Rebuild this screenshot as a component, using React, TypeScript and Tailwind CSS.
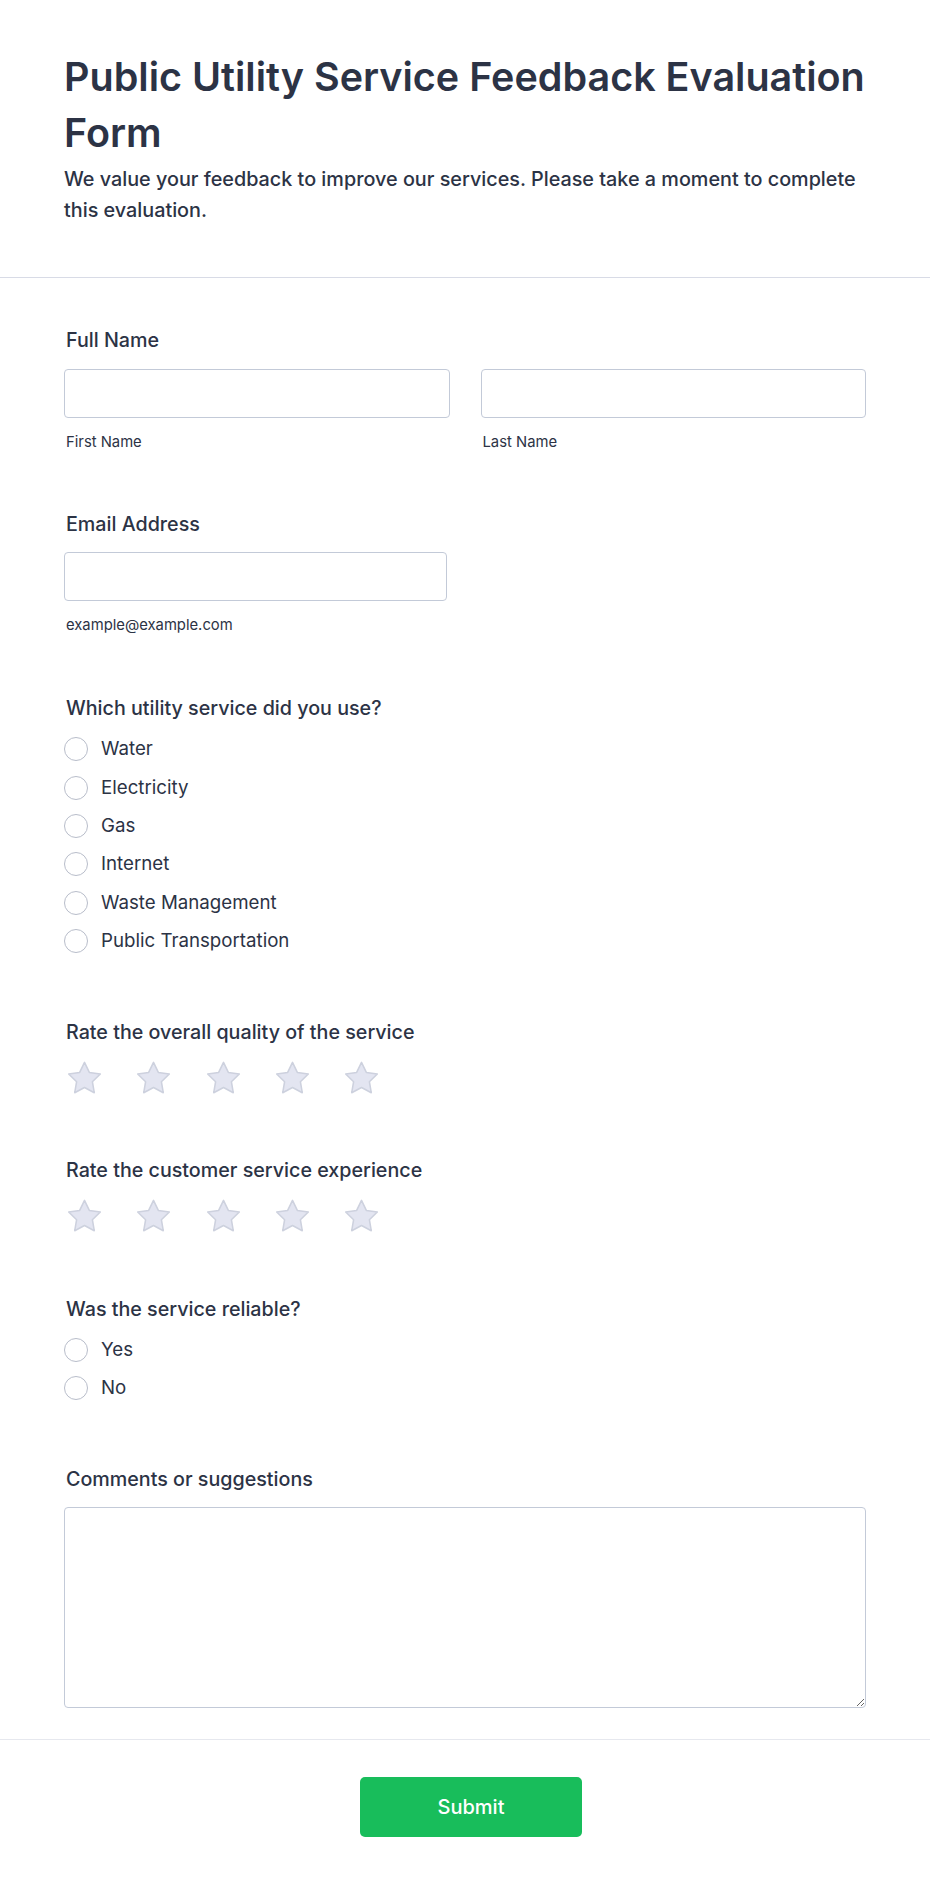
import React from "react";

const Star = () => (
  <svg width="37" height="35" viewBox="1.2 1.2 21.6 20.6" className="block">
    <path
      d="M12 2.6 L14.85 8.5 L21.3 9.45 L16.65 14.0 L17.75 20.45 L12 17.4 L6.25 20.45 L7.35 14.0 L2.7 9.45 L9.15 8.5 Z"
      fill="#e3e5f1"
      stroke="#cdd1de"
      strokeWidth="0.9"
      strokeLinejoin="round"
    />
  </svg>
);

const Radio = ({ label }: { label: string }) => (
  <div className="flex h-[38.4px] items-center">
    <span className="block h-[24px] w-[24px] rounded-full border border-[#b8bdca] bg-white" />
    <span className="ml-[13px] text-[18.7px] leading-[24px] text-[#2c3345]">{label}</span>
  </div>
);

const Label = ({ children }: { children: React.ReactNode }) => (
  <div className="mt-[2px] pl-[2px] text-[19.7px] font-medium leading-[24px] text-[#2c3345]">{children}</div>
);

const Stars = () => (
  <div className="flex gap-[32.3px] pl-[2px]">
    <Star />
    <Star />
    <Star />
    <Star />
    <Star />
  </div>
);

export default function App() {
  return (
    <div
      className="min-h-[1886px] w-full bg-white text-[#2c3345]"
      style={{ fontFamily: "Inter, 'Noto Sans', sans-serif" }}
    >
      <header className="border-b border-[#d8dbe6] px-[64px] pt-[49px] pb-[51px]">
        <h1 className="text-[39.5px] font-semibold leading-[56px] text-[#2c3345]">
          Public Utility Service Feedback Evaluation Form
        </h1>
        <p className="mt-[3px] text-[19.8px] font-medium leading-[31px] text-[#2c3345]">
          We value your feedback to improve our services. Please take a moment to complete this evaluation.
        </p>
      </header>

      <main className="px-[64px]">
        <section className="pt-[48px]">
          <Label>Full Name</Label>
          <div className="mt-[17px] grid grid-cols-2 gap-[31px]">
            <div>
              <input className="block h-[49px] w-full rounded-[4px] border border-[#c3cad8] bg-white" />
              <div className="mt-[14px] pl-[2px] text-[14.8px] leading-[20px] text-[#2c3345]">First Name</div>
            </div>
            <div>
              <input className="block h-[49px] w-full rounded-[4px] border border-[#c3cad8] bg-white" />
              <div className="mt-[14px] pl-[2px] text-[14.8px] leading-[20px] text-[#2c3345]">Last Name</div>
            </div>
          </div>
        </section>

        <section className="pt-[58px]">
          <Label>Email Address</Label>
          <input className="mt-[16px] block h-[49px] w-[383px] rounded-[4px] border border-[#c3cad8] bg-white" />
          <div className="mt-[14px] pl-[2px] text-[14.8px] leading-[20px] text-[#2c3345]">example@example.com</div>
        </section>

        <section className="pt-[59px]">
          <Label>Which utility service did you use?</Label>
          <div className="mt-[10px]">
            <Radio label="Water" />
            <Radio label="Electricity" />
            <Radio label="Gas" />
            <Radio label="Internet" />
            <Radio label="Waste Management" />
            <Radio label="Public Transportation" />
          </div>
        </section>

        <section className="pt-[58px]">
          <Label>Rate the overall quality of the service</Label>
          <div className="mt-[16px]">
            <Stars />
          </div>
        </section>

        <section className="pt-[61px]">
          <Label>Rate the customer service experience</Label>
          <div className="mt-[16px]">
            <Stars />
          </div>
        </section>

        <section className="pt-[62px]">
          <Label>Was the service reliable?</Label>
          <div className="mt-[9px]">
            <Radio label="Yes" />
            <Radio label="No" />
          </div>
        </section>

        <section className="pt-[58px] pb-[31px]">
          <Label>Comments or suggestions</Label>
          <textarea className="mt-[16px] block h-[201px] w-full resize-y rounded-[4px] border border-[#c3cad8] bg-white" />
        </section>
      </main>

      <footer className="flex justify-center border-t border-[#e6e8ee] pt-[37px] pb-[49px] pl-[12px]">
        <button className="h-[60px] w-[222px] rounded-[5px] bg-[#18bd5b] text-[20px] font-medium text-white">
          Submit
        </button>
      </footer>
    </div>
  );
}
